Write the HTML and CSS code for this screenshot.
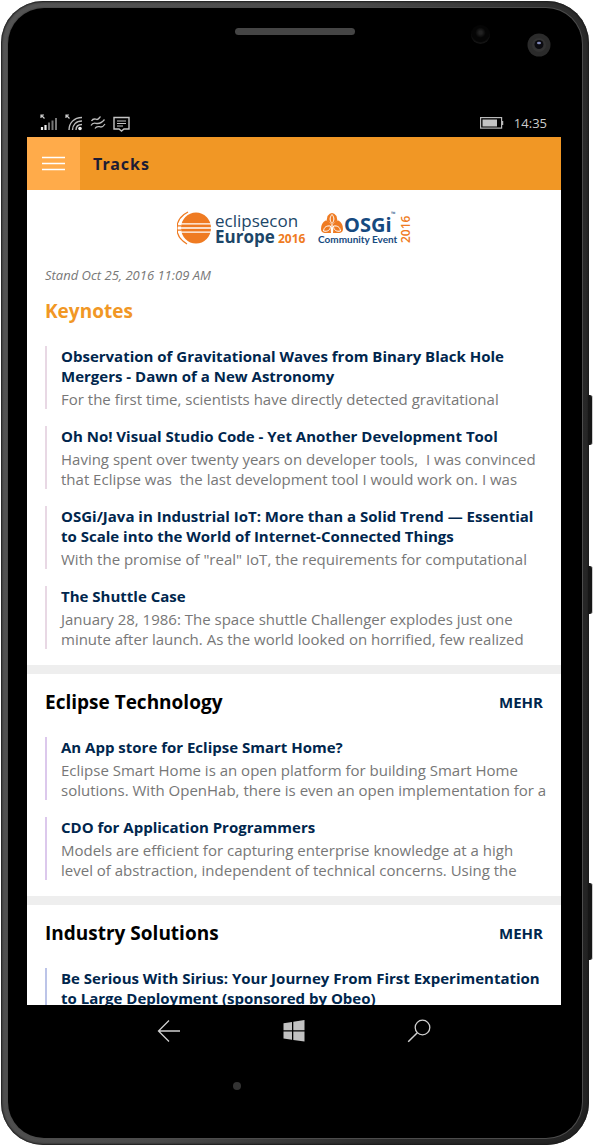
FILE: index.html
```html
<!DOCTYPE html>
<html lang="de">
<head>
<meta charset="utf-8">
<meta name="viewport" content="width=device-width, initial-scale=1">
<title>Tracks</title>
<link rel="stylesheet" href="styles.css">
</head>
<body>
<div class="phone">
  <span class="side-key side-key-up"></span>
  <span class="side-key side-key-down"></span>
  <span class="side-key side-key-power"></span>
  <div class="face">
    <div class="bezel-top">
      <span class="speaker"></span>
      <div class="sensors">
        <span class="sensor"></span>
        <svg class="camera" viewBox="0 0 24 24" aria-hidden="true">
          <circle cx="12" cy="12" r="11.500" fill="#2b2b2b"/>
          <circle cx="12" cy="12" r="7" fill="#333"/>
          <circle cx="12" cy="11.500" r="4.500" fill="#0b0b10"/>
          <ellipse cx="12" cy="10" rx="2" ry="1.300" fill="#8088b8"/>
        </svg>
      </div>
    </div>

    <div class="status">
      <div class="status-icons">
        <svg width="18" height="18" viewBox="0 0 18 18" aria-hidden="true">
          <path d="M.5 1H4M1 .5V4M1 1l3.500 3.500" stroke="#ccc" stroke-width="1.200" fill="none"/>
          <path d="M2 13v3M5.500 11v5" stroke="#eee" stroke-width="2.200"/>
          <path d="M9 8.500v7.500M12.500 6.500v9.500M16 4v12" stroke="#777" stroke-width="2"/>
        </svg>
        <svg width="18" height="18" viewBox="0 0 18 18" aria-hidden="true">
          <path d="M.5 1H4M1 .5V4M1 1l3.500 3.500" stroke="#ccc" stroke-width="1.200" fill="none"/>
          <path d="M4 16C4 9 9 3.500 17 3.500M7.500 16C7.500 11 11 7 17 7M11 16c0-3.500 2-5.500 6-5.500" stroke="#bbb" stroke-width="1.400" fill="none"/>
          <circle cx="15" cy="14.500" r="1.800" fill="#eee"/>
        </svg>
        <svg width="16" height="18" viewBox="0 0 16 18" aria-hidden="true">
          <path d="M1.500 7C3.500 3.500 5.500 5.500 7 5.500S9.500 3.500 10.500 2.500M1 11.500C3 7.500 5.500 9.500 7.500 9.500S12.500 8 14.500 5.500M5 14.500c2-3.500 4-1.500 6-1.500s3-1.500 4-3" stroke="#bbb" stroke-width="1.300" fill="none"/>
        </svg>
        <svg width="17" height="18" viewBox="0 0 17 18" aria-hidden="true">
          <path d="M1 3.500h15v11.500h-5l-2.500 2-2.500-2H1z" stroke="#c4c4c4" stroke-width="1.400" fill="none"/>
          <path d="M4 7h9M4 9.500h9M4 12h6" stroke="#c4c4c4" stroke-width="1.200"/>
        </svg>
      </div>
      <div class="status-right">
        <svg width="24" height="12" viewBox="0 0 24 12" aria-hidden="true">
          <rect x=".6" y=".6" width="21" height="10.500" fill="none" stroke="#bbb" stroke-width="1.200"/>
          <rect x="2.500" y="2.500" width="14.500" height="7" fill="#c4c4c4"/>
          <path d="M22.500 4v4" stroke="#bbb" stroke-width="1.500"/>
        </svg>
        <time>14:35</time>
      </div>
    </div>

    <div class="screen">
      <header class="appbar">
        <button class="menu" type="button" aria-label="Menu">
          <svg width="23" height="15" viewBox="0 0 23 15" aria-hidden="true">
            <path d="M0 1.500h23M0 7.500h23M0 13.500h23" stroke="#fff" stroke-width="1.300"/>
          </svg>
        </button>
        <h1>Tracks</h1>
      </header>

      <main class="content">
        <svg class="logos" width="234" height="44" viewBox="0 0 234 44" role="img" aria-label="EclipseCon Europe 2016, OSGi Community Event 2016">
          <ellipse cx="19" cy="21" rx="15" ry="15.500" fill="#ef7b22"/>
          <path d="M11 5C-3 12-4 29 10 37" stroke="#ef7b22" stroke-width="1.300" fill="none"/>
          <path d="M1 16.800h33.500M1 21h33.500M1 25.200h33.500" stroke="#fff" stroke-width="1.300"/>
          <path d="M0 18.900h4M0 23.100h4" stroke="#ef7b22" stroke-width="1.200"/>
          <text x="38" y="20" class="logo-light">eclipsecon</text>
          <text x="38" y="36" class="logo-bold">Europe</text>
          <text x="101" y="36" class="logo-year">2016</text>
          <g fill="#ef7b22">
            <path d="M150.500 9q4.500-6 9 0l1 5q-4 1-5.500 4-1.500-3-5.500-4z"/>
            <path d="M144 22q0-6 4.500-8.500 5.500 1 6 5.500-1.500 3-.5 7h-6.500q-3.500-.5-3.500-4z"/>
            <path d="M166 22q0-6-4.500-8.500-5.500 1-6 5.500 1.500 3 .5 7h6.500q3.500-.5 3.500-4z"/>
          </g>
          <path d="M155 7.500c-2.500 3-2.500 6 0 9 2.500-3 2.500-6 0-9M146.500 24c.5-4 3-5.500 7-5 0 4-3 6-7 5M163.500 24c-.5-4-3-5.500-7-5 0 4 3 6 7 5" fill="none" stroke="#fff" stroke-width="1"/>
          <text x="167" y="25" class="logo-osgi">OSGi</text>
          <text x="214" y="9" class="logo-tm">™</text>
          <text x="141" y="36" class="logo-event">Community Event</text>
          <text transform="translate(233 36) rotate(-90)" class="logo-side">2016</text>
        </svg>
        <p class="stamp">Stand Oct 25, 2016 11:09 AM</p>

        <section class="track track-first tone-rose">
          <div class="track-head"><h2>Keynotes</h2></div>
          <article class="talk">
            <h3>Observation of Gravitational Waves from Binary Black Hole<br>Mergers - Dawn of a New Astronomy</h3>
            <p>For the first time, scientists have directly detected gravitational</p>
          </article>
          <article class="talk">
            <h3>Oh No! Visual Studio Code - Yet Another Development Tool</h3>
            <p>Having spent over twenty years on developer tools,&nbsp; I was convinced<br>that Eclipse was&nbsp; the last development tool I would work on. I was</p>
          </article>
          <article class="talk">
            <h3>OSGi/Java in Industrial IoT: More than a Solid Trend — Essential<br>to Scale into the World of Internet-Connected Things</h3>
            <p>With the promise of "real" IoT, the requirements for computational</p>
          </article>
          <article class="talk">
            <h3>The Shuttle Case</h3>
            <p>January 28, 1986: The space shuttle Challenger explodes just one<br>minute after launch. As the world looked on horrified, few realized</p>
          </article>
        </section>

        <section class="track tone-violet">
          <div class="track-head"><h2>Eclipse Technology</h2><a href="#eclipse">MEHR</a></div>
          <article class="talk">
            <h3>An App store for Eclipse Smart Home?</h3>
            <p>Eclipse Smart Home is an open platform for building Smart Home<br>solutions. With OpenHab, there is even an open implementation for a</p>
          </article>
          <article class="talk">
            <h3>CDO for Application Programmers</h3>
            <p>Models are efficient for capturing enterprise knowledge at a high<br>level of abstraction, independent of technical concerns. Using the</p>
          </article>
        </section>

        <section class="track tone-blue">
          <div class="track-head"><h2>Industry Solutions</h2><a href="#industry">MEHR</a></div>
          <article class="talk">
            <h3>Be Serious With Sirius: Your Journey From First Experimentation<br>to Large Deployment (sponsored by Obeo)</h3>
          </article>
        </section>
      </main>
    </div>

    <nav class="keys">
      <button type="button" aria-label="Back">
        <svg width="24" height="24" viewBox="0 0 24 24" aria-hidden="true"><path d="M23 12H1.500M12 1.500L1.500 12 12 22.500" stroke="#d0d0d0" stroke-width="1.300" fill="none"/></svg>
      </button>
      <button type="button" aria-label="Start">
        <svg width="24" height="24" viewBox="0 0 24 24" aria-hidden="true"><path d="M1.500 4.300l8.500-1.300v8.200H1.500zM11.300 2.800L22.500 1v10.200H11.300zM1.500 12.500H10v8.300l-8.500-1.300zM11.300 12.500h11.200V22.500l-11.200-1.500z" fill="#c2c2c2"/></svg>
      </button>
      <button type="button" aria-label="Search">
        <svg width="24" height="24" viewBox="0 0 24 24" aria-hidden="true"><circle cx="15.500" cy="8.500" r="7.300" stroke="#d0d0d0" stroke-width="1.300" fill="none"/><path d="M10.300 13.700L1.200 22.700" stroke="#d0d0d0" stroke-width="1.500"/></svg>
      </button>
    </nav>
    <div class="bezel-bottom"><span class="mic"></span></div>
  </div>
</div>
</body>
</html>
```
FILE: styles.css
```css
* { box-sizing: border-box; }

body {
  margin: 0;
  height: 100vh;
  padding: 1px 5px 1px 1px;
  background: #fff;
  font-family: "Open Sans", "Noto Sans", sans-serif;
}

h1, h2, h3, p { margin: 0; }

button {
  border: 0;
  padding: 0;
  background: none;
  display: grid;
  place-items: center;
}

.phone {
  position: relative;
  height: 100%;
  padding: 7px;
  border-radius: 42px;
  background: linear-gradient(100deg, #555 0%, #4a4a4a 45%, #2a2a2a 75%, #222 100%);
  box-shadow: inset 0 0 2px 1px #1a1a1a;
}

.side-key {
  position: absolute;
  right: -4px;
  width: 5px;
  background: #161616;
  border-right: 1px solid #ccc;
  border-radius: 0 3px 3px 0;
}
.side-key-up { top: 394px; height: 50px; }
.side-key-down { top: 565px; height: 48px; }
.side-key-power { top: 882px; height: 77px; }

.face {
  height: 100%;
  display: flex;
  flex-direction: column;
  padding: 0 21px 0 19px;
  border-radius: 36px;
  background: #000;
  box-shadow: 0 0 0 1px #4c4c4c;
}

.bezel-top {
  height: 101px;
  flex: none;
  display: grid;
  grid-template-columns: 1fr 120px 1fr;
  align-items: start;
  padding-left: 2px;
}
.speaker {
  grid-column: 2;
  height: 7px;
  margin-top: 20px;
  border-radius: 4px;
  background: #454545;
}
.sensors {
  display: flex;
  justify-content: flex-end;
  gap: 37px;
  padding: 17px 10px 0 0;
}
.sensor {
  width: 19px;
  height: 19px;
  border-radius: 50%;
  background: radial-gradient(circle at 50% 40%, #222 0 10%, #050505 35% 60%, #141414 70%);
}
.camera {
  width: 24px;
  height: 24px;
  margin-top: 8px;
}

.status {
  height: 28px;
  flex: none;
  display: flex;
  align-items: center;
  justify-content: space-between;
  padding: 0 14px 0 13px;
}
.status-icons { display: flex; gap: 7px; }
.status-right { display: flex; align-items: center; gap: 10px; }
.status time { color: #ccc; font-size: 13px; line-height: 20px; }

.screen {
  flex: 1;
  min-height: 0;
  overflow: hidden;
  background: #fff;
}
.appbar {
  height: 53px;
  display: flex;
  align-items: center;
  background: #f19725;
}
.menu {
  width: 53px;
  height: 100%;
  background: #ffab4a;
}
.appbar h1 {
  padding-left: 13px;
  color: #1c1c34;
  font-family: "Noto Sans", sans-serif;
  font-size: 16px;
  line-height: 24px;
  letter-spacing: 1px;
}

.logos { display: block; margin: 17px auto 14px; }
.logo-light { font: 17px "Open Sans", sans-serif; fill: #1c4668; }
.logo-bold { font: bold 17px "Open Sans", sans-serif; fill: #1c4668; }
.logo-year { font: bold 12px "Open Sans", sans-serif; fill: #ef7b22; }
.logo-osgi { font: bold 20px "Open Sans", sans-serif; fill: #164a80; }
.logo-tm { font: 6px "Open Sans", sans-serif; fill: #164a80; }
.logo-event { font: bold 10px Lato, sans-serif; fill: #164a80; }
.logo-side { font: 600 12px "Open Sans", sans-serif; fill: #ef7b22; }

.stamp {
  padding: 0 18px;
  color: #777;
  font-size: 13px;
  font-style: italic;
  line-height: 20px;
}

.track {
  display: grid;
  grid-template-columns: minmax(0, 1fr);
  gap: 17px;
  padding: 14px 18px 16px;
  border-top: 9px solid #eee;
}
.track-first { border-top: 0; padding-top: 12px; }
.track-head {
  display: flex;
  align-items: center;
  justify-content: space-between;
  margin-bottom: 4px;
}
.track-head h2 { font-size: 19px; line-height: 28px; color: #000; font-weight: 700; }
.track-first h2 { color: #f19725; }
.track-head a {
  color: #00264d;
  font-size: 15px;
  font-weight: 700;
  line-height: 28px;
  text-decoration: none;
}

.talk {
  padding-left: 14px;
  border-left: 2px solid #e8d8e4;
  white-space: nowrap;
  height: 63px;
}
.tone-violet .talk { border-color: #dcc8ec; }
.tone-blue .talk { border-color: #bcc4e8; }
.talk h3 { color: #00264d; font-size: 15px; line-height: 20px; font-weight: 700; }
.talk p { margin-top: 3px; color: #777; font-size: 15px; line-height: 20px; }

.keys {
  height: 52px;
  flex: none;
  display: flex;
  align-items: center;
  justify-content: space-between;
  padding: 0 130px;
}
.bezel-bottom { height: 81px; flex: none; display: grid; grid-template-columns: 2fr 3fr; }
.mic {
  justify-self: end;
  width: 8px;
  height: 8px;
  margin-top: 25px;
  border-radius: 50%;
  background: #333;
}
```
